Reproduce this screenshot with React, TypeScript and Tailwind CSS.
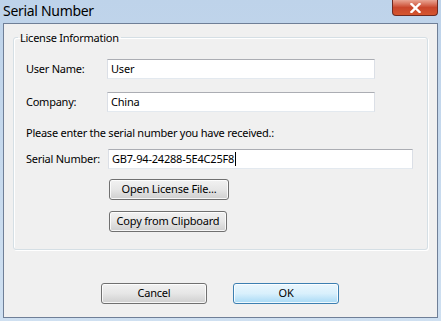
import React from 'react';

const font = { fontFamily: '"Noto Sans", "Open Sans", sans-serif' };

function TextBox({ value, width, caret }: { value: string; width: string; caret?: boolean }) {
  return (
    <div
      className={`${width} h-[20px] bg-white border border-[#dbdfe6] border-t-[#abadb3] border-b-[#e3e9ef] flex items-center pl-[3px] text-[11px] tracking-[-0.2px] text-black whitespace-nowrap`}
    >
      <span>{value}</span>
      {caret && <span className="w-px h-[14px] bg-black ml-px" />}
    </div>
  );
}

function Button({ label, width, primary }: { label: string; width: string; primary?: boolean }) {
  return (
    <button
      className={`${width} h-[21px] rounded-[3px] border text-[11px] tracking-[-0.2px] text-black whitespace-nowrap flex items-center justify-center shadow-[inset_0_0_0_1px_rgba(255,255,255,0.8)] ${
        primary
          ? 'border-[#3c7fb1] bg-gradient-to-b from-[#eaf6fd] via-[#d9f0fc] to-[#a7d9f5]'
          : 'border-[#707070] bg-gradient-to-b from-[#f2f2f2] via-[#e6e6e6] to-[#cfcfcf]'
      }`}
    >
      {label}
    </button>
  );
}

export default function App() {
  return (
    <div
      className="w-[441px] h-[321px] flex flex-col bg-gradient-to-b from-[#bed3ea] to-[#cfe0f1] overflow-hidden"
      style={font}
    >
      {/* Title bar */}
      <div className="h-[23px] flex items-start shrink-0">
        <span className="text-[14px] tracking-[-0.3px] leading-[20px] text-black pl-[3px] pt-[1px] whitespace-nowrap">
          Serial Number
        </span>
        <div className="ml-auto mr-[3px] w-[46px] h-[16px] rounded-b-[4px] border border-t-0 border-[#6d2a22] bg-gradient-to-b from-[#e8a493] via-[#c9462c] to-[#d5562f] flex items-center justify-center">
          <svg width="11" height="10" viewBox="0 0 11 10">
            <path d="M1.5 1 L9.5 9 M9.5 1 L1.5 9" stroke="#ffffff" strokeWidth="2.4" strokeLinecap="square" />
          </svg>
        </div>
      </div>

      {/* Client area */}
      <div className="mx-[3px] h-[295px] border border-[#6f7f97] bg-[#f0f0f0] flex flex-col text-[11px] tracking-[-0.25px] text-black">
        <fieldset className="mx-[9px] mt-[6px] h-[220px] border border-[#d5dfe5] rounded-[3px] shadow-[inset_1px_1px_0_#ffffff,1px_1px_0_#ffffff] pl-[12px]">
          <legend className="-ml-[8px] px-[2px] leading-[15px] whitespace-nowrap">License Information</legend>

          <div className="mt-[14px] flex items-center">
            <span className="w-[81px] whitespace-nowrap">User Name:</span>
            <TextBox value="User" width="w-[268px]" />
          </div>
          <div className="mt-[13px] flex items-center">
            <span className="w-[81px] whitespace-nowrap">Company:</span>
            <TextBox value="China" width="w-[268px]" />
          </div>
          <div className="mt-[11px] h-[20px] flex items-center whitespace-nowrap">
            Please enter the serial number you have received.:
          </div>
          <div className="mt-[6px] flex items-center">
            <span className="w-[82px] whitespace-nowrap">Serial Number:</span>
            <TextBox value="GB7-94-24288-5E4C25F8" width="w-[305px]" caret />
          </div>
          <div className="mt-[10px] pl-[83px]">
            <Button label="Open License File..." width="w-[120px]" />
          </div>
          <div className="mt-[11px] pl-[83px]">
            <Button label="Copy from Clipboard" width="w-[118px]" />
          </div>
        </fieldset>

        <div className="mt-[33px] flex pl-[97px] gap-[26px]">
          <Button label="Cancel" width="w-[106px]" />
          <Button label="OK" width="w-[106px]" primary />
        </div>
      </div>
    </div>
  );
}
